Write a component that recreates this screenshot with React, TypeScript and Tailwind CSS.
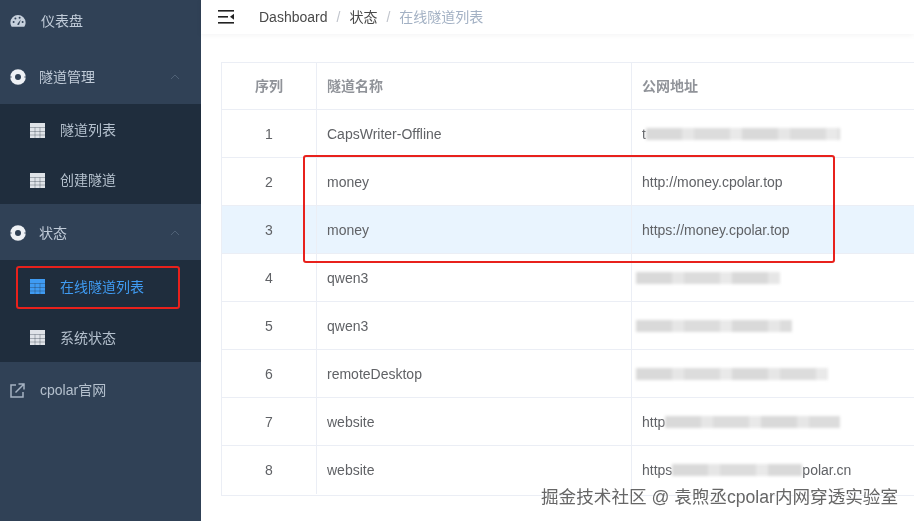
import React from "react";

const cjk = { fontFamily: '"Liberation Sans", "Noto Sans CJK SC", sans-serif' };

const GaugeIcon = () => (
  <svg width="16" height="14" viewBox="0 0 16 14" fill="#c6d0dc">
    <path d="M8 1a7.6 7.6 0 0 0-7.6 7.6c0 1.6.5 3 1.3 4.2h12.6c.8-1.2 1.3-2.6 1.3-4.2A7.6 7.6 0 0 0 8 1z" />
    <circle cx="3.6" cy="8" r="1" fill="#304156" />
    <circle cx="5.4" cy="4.6" r="1" fill="#304156" />
    <circle cx="9.6" cy="3.8" r="1" fill="#304156" />
    <circle cx="12.6" cy="8" r="1" fill="#304156" />
    <path d="M7 10.6 10.8 5.6 9 11z" fill="#304156" />
  </svg>
);

const RingIcon = () => (
  <svg width="16" height="16" viewBox="0 0 16 16">
    <circle cx="8" cy="8" r="7.8" fill="#eef1f5" />
    <path d="M0 8h1.6M14.4 8H16" stroke="#304156" strokeWidth="1.2" />
    <circle cx="8" cy="8" r="3" fill="#304156" />
  </svg>
);

const TableIcon = ({ color }: { color: string }) => (
  <svg width="15" height="15" viewBox="0 0 15 15">
    <rect width="15" height="15" fill={color} />
    <path d="M0 4.5h15M0 8.5h15M0 12h15M5 4.5V15M10 4.5V15" stroke="#1f2d3d" strokeOpacity="0.4" strokeWidth="0.8" />
  </svg>
);

const Chevron = () => (
  <svg width="10" height="6" viewBox="0 0 10 6" fill="none" stroke="#4f6176" strokeWidth="1">
    <path d="M1 5 5 1l4 4" />
  </svg>
);

const LinkOut = () => (
  <svg width="15" height="15" viewBox="0 0 15 15" fill="none" stroke="#a5b2c2" strokeWidth="1.5">
    <path d="M6 2H1v12h12V9" />
    <path d="M5.5 9.5 13.5 1.5M8.5 1h5.5v5.5" />
  </svg>
);

const Burger = () => (
  <svg width="16" height="14" viewBox="0 0 16 14" fill="#222">
    <rect x="0" y="0" width="16" height="1.6" />
    <rect x="0" y="6" width="10" height="1.6" />
    <rect x="0" y="12" width="16" height="1.6" />
    <path d="M16 3.8v6l-4-3z" />
  </svg>
);

const SubItem = ({ label, active, tall }: { label: string; active?: boolean; tall?: boolean }) => (
  <div
    className={`flex items-center pl-[30px] pt-[2px] gap-[15px] text-sm ${tall ? "h-[51px]" : "h-[50px]"} ${
      active ? "text-[#3f9bf2]" : "text-[#b4c0cd]"
    }`}
  >
    <TableIcon color={active ? "#3f9bf2" : "#dfe3e8"} />
    <span>{label}</span>
  </div>
);

const GroupItem = ({ label, className }: { label: string; className: string }) => (
  <div className={`flex items-center pl-[10px] pr-[21px] gap-[13px] text-sm text-[#c0cbd8] ${className}`}>
    <RingIcon />
    <span className="flex-1">{label}</span>
    <Chevron />
  </div>
);

type Row = { no: number; name: string; addr?: string; lead?: string; tail?: string; bar?: number; left?: number; hl?: boolean };

const rows: Row[] = [
  { no: 1, name: "CapsWriter-Offline", lead: "t", bar: 194 },
  { no: 2, name: "money", addr: "http://money.cpolar.top" },
  { no: 3, name: "money", addr: "https://money.cpolar.top", hl: true },
  { no: 4, name: "qwen3", bar: 144, left: -6 },
  { no: 5, name: "qwen3", bar: 156, left: -6 },
  { no: 6, name: "remoteDesktop", bar: 192, left: -6 },
  { no: 7, name: "website", lead: "http", bar: 175 },
  { no: 8, name: "website", lead: "https", bar: 130, tail: "polar.cn" },
];

const Redacted = ({ r }: { r: Row }) => (
  <div className="flex items-center" style={{ marginLeft: r.left ?? 0 }}>
    {r.lead && <span>{r.lead}</span>}
    <div
      className="h-3 blur-[1.5px] bg-[repeating-linear-gradient(90deg,#d9d9d9_0_36px,#e6e6e6_36px_48px,#dcdcdc_48px_84px,#e9e9e9_84px_96px)]"
      style={{ width: r.bar }}
    />
    {r.tail && <span>{r.tail}</span>}
  </div>
);

export default function App() {
  return (
    <div className="relative flex h-[521px] w-[914px] overflow-hidden bg-white blur-[0.35px]" style={cjk}>
      <aside className="w-[201px] shrink-0 bg-[#304156]">
        <div className="-mt-[5px] flex h-[52px] items-center pl-[10px] gap-[15px] text-sm text-[#c0cbd8]">
          <GaugeIcon />
          <span>仪表盘</span>
        </div>
        <div className="h-[5px]" />
        <GroupItem label="隧道管理" className="h-[52px] pb-[2px]" />
        <div className="bg-[#1f2d3d]">
          <SubItem label="隧道列表" />
          <SubItem label="创建隧道" />
        </div>
        <GroupItem label="状态" className="h-[56px] pt-[2px]" />
        <div className="bg-[#1f2d3d]">
          <SubItem label="在线隧道列表" active tall />
          <SubItem label="系统状态" tall />
        </div>
        <div className="flex h-[56px] items-center pl-[10px] gap-[15px] text-sm text-[#b4c0cd]">
          <LinkOut />
          <span>cpolar官网</span>
        </div>
      </aside>

      <main className="min-w-0 flex-1">
        <header className="flex h-[34px] items-center pl-[17px] text-sm shadow-[0_1px_6px_rgba(0,21,41,0.05)]">
          <Burger />
          <nav className="ml-[25px] flex items-center text-[#4a4a4a]">
            <span>Dashboard</span>
            <span className="mx-[9px] text-[#c0c4cc]">/</span>
            <span>状态</span>
            <span className="mx-[9px] text-[#c0c4cc]">/</span>
            <span className="text-[#a3b1c4]">在线隧道列表</span>
          </nav>
        </header>

        <div className="pl-5 pt-7">
          <div className="w-[800px] border border-[#ebeef5] pb-[1px] text-sm text-[#606266]">
            <div className="flex h-[47px] items-center border-b border-[#ebeef5] font-bold text-[#909399]">
              <div className="flex h-full w-[95px] items-center justify-center border-r border-[#ebeef5]">序列</div>
              <div className="flex h-full w-[315px] items-center border-r border-[#ebeef5] pl-[10px]">隧道名称</div>
              <div className="pl-[10px]">公网地址</div>
            </div>
            {rows.map((r) => (
              <div
                key={r.no}
                className={`flex h-[48px] items-center border-b border-[#ebeef5] last:border-b-0 ${r.hl ? "bg-[#e9f4fe]" : ""}`}
              >
                <div className="flex h-full w-[95px] items-center justify-center border-r border-[#ebeef5]">{r.no}</div>
                <div className="flex h-full w-[315px] items-center border-r border-[#ebeef5] pl-[10px]">{r.name}</div>
                <div className="pl-[10px]">{r.addr ?? <Redacted r={r} />}</div>
              </div>
            ))}
          </div>
        </div>
      </main>

      {/* annotation boxes and watermark sit on top of the page */}
      <div className="absolute left-[16px] top-[266px] h-[43px] w-[164px] rounded-[3px] border-2 border-[#e8211c]" />
      <div className="absolute left-[303px] top-[155px] h-[108px] w-[532px] rounded-[3px] border-2 border-[#e8211c]" />
      <div className="absolute left-[541px] top-[486px] text-[17.6px] leading-[22px] whitespace-nowrap text-[#666] [text-shadow:0_0_2px_#fff]">
        掘金技术社区 @ 袁煦丞cpolar内网穿透实验室
      </div>
    </div>
  );
}
